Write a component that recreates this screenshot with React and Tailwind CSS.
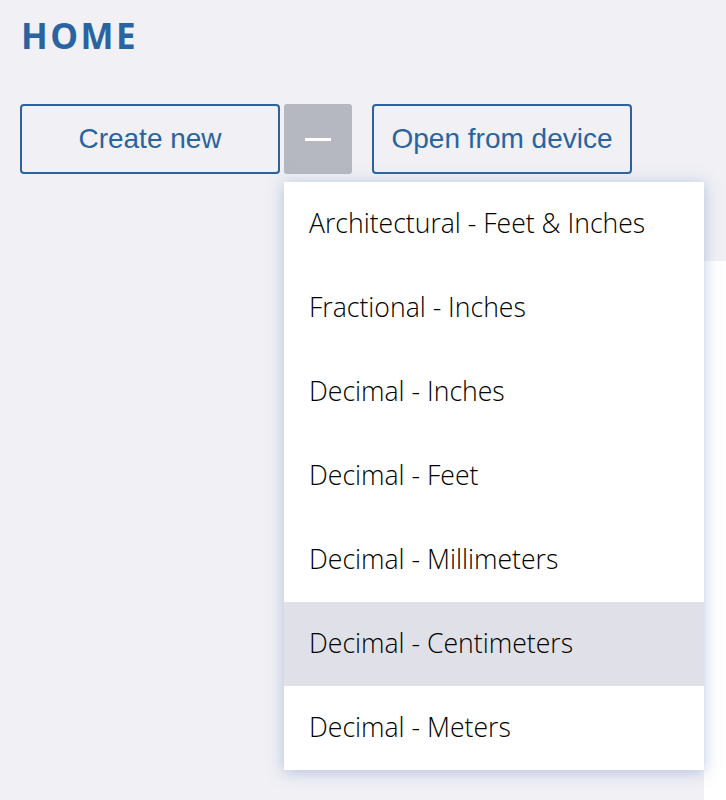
import React from 'react';

const UNITS = [
  'Architectural - Feet & Inches',
  'Fractional - Inches',
  'Decimal - Inches',
  'Decimal - Feet',
  'Decimal - Millimeters',
  'Decimal - Centimeters',
  'Decimal - Meters',
];

const App = () => {
  const selected = 'Decimal - Centimeters';

  return (
    <div className="relative w-[726px] h-[800px] overflow-hidden bg-[#f0f0f5]">
      {/* panel on the right, mostly covered by the menu */}
      <div className="absolute left-[704px] top-[261px] w-[60px] h-[600px] bg-white" />

      <div className="relative px-5 pt-[14px]">
        <h1 className="pl-[1px] text-[35px] leading-[44px] font-bold tracking-[0.07em] text-[#2a64a0] font-['Open_Sans',sans-serif]">
          HOME
        </h1>

        <div className="mt-[46px] flex items-start font-['Liberation_Sans',Arial,sans-serif]">
          <button className="w-[260px] h-[70px] rounded-[4px] border-2 border-[#2a64a0] text-[28px] text-[#2a64a0]">
            Create new
          </button>
          <div className="relative ml-[4px]">
            <button className="flex w-[68px] h-[70px] items-center justify-center rounded-[3px] bg-[#b6b8c1]">
              <span className="block w-[26px] h-[3px] bg-white" />
            </button>
            <ul className="absolute left-0 top-[78px] w-[420px] bg-white shadow-[0_2px_14px_rgba(120,145,195,0.5)] font-['Open_Sans',sans-serif] z-10">
              {UNITS.map((u) => (
                <li
                  key={u}
                  className={`flex h-[84px] items-center pl-[25px] text-[26.6px] font-light text-black whitespace-nowrap ${u === selected ? 'bg-[#dfe0e8]' : ''}`}
                >
                  {u}
                </li>
              ))}
            </ul>
          </div>
          <button className="ml-[20px] w-[260px] h-[70px] rounded-[4px] border-2 border-[#2a64a0] text-[28px] text-[#2a64a0]">
            Open from device
          </button>
        </div>
      </div>
    </div>
  );
};

export default App;
